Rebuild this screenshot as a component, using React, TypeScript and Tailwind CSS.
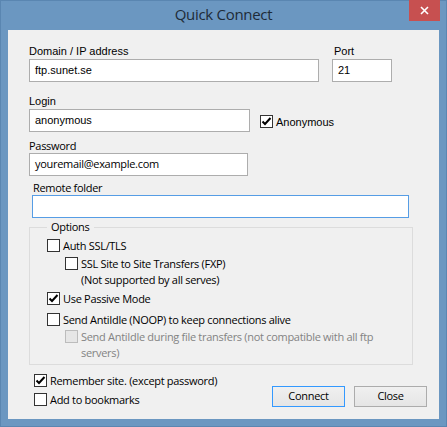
import React from "react";

const tahoma = "font-['Liberation_Sans',Arial,sans-serif] text-[11px]";
const segoe = "font-['Open_Sans','Lato',sans-serif] text-[11px] tracking-[-0.3px]";

function CheckBox({ checked = false, disabled = false }: { checked?: boolean; disabled?: boolean }) {
  return (
    <span
      className={
        "flex h-[13px] w-[13px] shrink-0 items-center justify-center border " +
        (disabled ? "border-[#bcbcbc] bg-[#e6e6e6]" : "border-[#333333] bg-white")
      }
    >
      {checked && (
        <svg width="11" height="11" viewBox="0 0 11 11">
          <path d="M1.5 5.5 L4 8 L9.5 2" fill="none" stroke="#000" strokeWidth="2" />
        </svg>
      )}
    </span>
  );
}

function Option({
  label,
  checked,
  disabled,
  font = segoe,
}: {
  label: React.ReactNode;
  checked?: boolean;
  disabled?: boolean;
  font?: string;
}) {
  return (
    <label className={"flex items-start gap-[3px] leading-[16px] " + font + (disabled ? " text-[#838383]" : " text-black")}>
      <span className="pt-[1px]">
        <CheckBox checked={checked} disabled={disabled} />
      </span>
      <span>{label}</span>
    </label>
  );
}

function Field({ value, className, font = tahoma }: { value: string; className: string; font?: string }) {
  return (
    <div
      className={
        "flex h-[23px] items-center border bg-white pl-[5px] text-black " + font + " " + className
      }
    >
      {value}
    </div>
  );
}

export default function App() {
  return (
    <div className="flex h-[427px] w-[447px] flex-col border border-[#5a86b1] bg-[#6b97c1]">
      <div className="relative flex h-[29px] shrink-0 items-center justify-center">
        <span className="pb-[2px] font-['Open_Sans',sans-serif] text-[15px] tracking-[-0.3px] text-[#1e2b38]">Quick Connect</span>
        <button className="absolute -top-px right-[6px] flex h-[21px] w-[31px] items-center justify-center bg-[#c75050]">
          <svg width="9" height="9" viewBox="0 0 9 9">
            <path d="M1 1 L8 8 M8 1 L1 8" stroke="#fff" strokeWidth="1.6" />
          </svg>
        </button>
      </div>

      <div className="mx-[7px] mb-[7px] flex flex-1 flex-col bg-[#f0f0f0] pl-[21px] pt-[15px]">
        {/* domain / port */}
        <div className="flex gap-[13px]">
          <div className="flex flex-col">
            <span className={"h-[13px] leading-[13px] text-black " + tahoma}>Domain / IP address</span>
            <Field value="ftp.sunet.se" className="mt-[1px] w-[290px] border-[#adadad]" />
          </div>
          <div className="flex flex-col">
            <span className={"h-[13px] pl-[2px] leading-[13px] text-black " + tahoma}>Port</span>
            <Field value="21" className="mt-[1px] w-[60px] border-[#adadad]" />
          </div>
        </div>

        {/* login */}
        <span className={"mt-[13px] h-[13px] leading-[13px] text-black " + tahoma}>Login</span>
        <div className="mt-[1px] flex items-center">
          <Field value="anonymous" className="w-[221px] border-[#adadad]" />
          <div className="ml-[10px] mt-[2px]">
            <Option label="Anonymous" checked font={tahoma} />
          </div>
        </div>

        {/* password */}
        <span className={"mt-[7px] h-[13px] leading-[13px] text-black " + segoe}>Password</span>
        <Field value="youremail@example.com" font={segoe} className="mt-[1px] w-[219px] border-[#adadad]" />

        {/* remote folder */}
        <div className="ml-[3px] mt-[5px] flex flex-col">
          <span className={"h-[13px] pl-[1px] leading-[13px] text-black " + segoe}>Remote folder</span>
          <Field value="" className="mt-[1px] w-[377px] border-[#569de5]" />
        </div>

        {/* options group */}
        <fieldset className="mt-[2px] w-[384px] border border-[#dcdcdc] pb-[3px] pl-[17px] pt-[4px]">
          <legend className={"px-[4px] leading-[14px] text-black " + segoe}>Options</legend>
          <div className="flex flex-col">
            <Option label="Auth SSL/TLS" />
            <div className="ml-[18px] mt-[2px]">
              <Option
                label={
                  <>
                    SSL Site to Site Transfers (FXP)
                    <br />
                    (Not supported by all serves)
                  </>
                }
              />
            </div>
            <div className="mt-[3px]">
              <Option label="Use Passive Mode" checked />
            </div>
            <div className="mt-[5px]">
              <Option label="Send AntiIdle (NOOP) to keep connections alive" />
            </div>
            <div className="ml-[18px] mt-[1px]">
              <Option
                disabled
                label={
                  <>
                    Send AntiIdle during file transfers (not compatible with all ftp
                    <br />
                    servers)
                  </>
                }
              />
            </div>
          </div>
        </fieldset>

        {/* bottom */}
        <div className="mt-[8px] flex pr-[12px]">
          <div className="ml-[5px] flex flex-col gap-[3px]">
            <Option label="Remember site. (except password)" checked />
            <Option label="Add to bookmarks" />
          </div>
          <div className="ml-auto mt-[13px] flex gap-[9px]">
            <button
              className={
                "h-[21px] w-[73px] border border-[#3399ff] bg-gradient-to-b from-[#f0f0f0] to-[#e5e5e5] text-black " + segoe
              }
            >
              Connect
            </button>
            <button
              className={
                "h-[21px] w-[73px] border border-[#acacac] bg-gradient-to-b from-[#f0f0f0] to-[#e5e5e5] text-black " + segoe
              }
            >
              Close
            </button>
          </div>
        </div>
      </div>
    </div>
  );
}
